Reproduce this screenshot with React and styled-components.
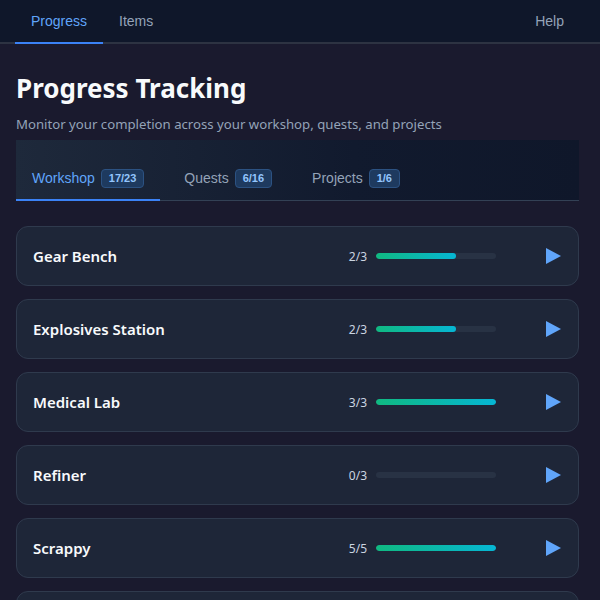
import React from 'react';
import styled, { createGlobalStyle } from 'styled-components';

const GlobalStyle = createGlobalStyle`
  html, body {
    margin: 0;
    padding: 0;
    background: #1a1a2e;
  }
  body {
    font-family: "Segoe UI", "Noto Sans", "Liberation Sans", sans-serif;
    color: #f1f5f9;
  }
  * { box-sizing: border-box; }
`;

// Top navigation
const Nav = styled.nav`
  height: 44px;
  display: flex;
  align-items: stretch;
  padding: 0 20px 0 15px;
  background: #0f172a;
  border-bottom: 2px solid #2d3342;
`;

const NavTab = styled.button`
  font-family: "Liberation Sans", Arial, sans-serif;
  font-size: 14px;
  background: none;
  border: none;
  padding: 0 16px;
  margin-bottom: -2px;
  color: ${p => (p.active ? '#60a5fa' : '#94a3b8')};
  border-bottom: 2px solid ${p => (p.active ? '#3b82f6' : 'transparent')};
  cursor: pointer;
  margin-left: ${p => (p.push ? 'auto' : '0')};
`;

const Main = styled.main`
  padding: 26px 21px 0 16px;
`;

const Title = styled.h1`
  margin: 0;
  font-size: 26px;
  font-weight: 700;
  line-height: 36px;
  color: #f8fafc;
`;

const Subtitle = styled.p`
  margin: 8px 0 0;
  font-size: 13.2px;
  line-height: 20px;
  color: #94a3b8;
`;

// Section tabs
const TabBar = styled.div`
  margin-top: 6px;
  height: 61px;
  display: flex;
  align-items: flex-end;
  background: linear-gradient(90deg, #1e293b 0%, #111a2e 60%, #0f172a 100%);
  border-bottom: 1px solid #334155;
`;

const Tab = styled.button`
  font-family: "Liberation Sans", Arial, sans-serif;
  font-size: 14px;
  height: 42px;
  padding: 0 16px 2px;
  display: flex;
  align-items: center;
  gap: 6px;
  background: none;
  border: none;
  margin-bottom: -1px;
  margin-right: 8px;
  color: ${p => (p.active ? '#60a5fa' : '#94a3b8')};
  border-bottom: 2px solid ${p => (p.active ? '#3b82f6' : 'transparent')};
`;

const Badge = styled.span`
  font-family: "Liberation Sans", Arial, sans-serif;
  font-size: 11px;
  font-weight: 700;
  line-height: 15px;
  padding: 1px 7px;
  border-radius: 4px;
  background: #1e3a5f;
  border: 1px solid #2c5282;
  color: #93c5fd;
`;

// Station cards
const List = styled.div`
  margin-top: 25px;
  display: flex;
  flex-direction: column;
  gap: 13px;
`;

const Card = styled.div`
  height: 60px;
  display: flex;
  align-items: center;
  padding: 0 17px 0 16px;
  background: #1e2638;
  border: 1px solid #2f3a4d;
  border-radius: 12px;
`;

const Name = styled.span`
  flex: 1;
  font-size: 15px;
  font-weight: 600;
  color: #f8fafc;
`;

const Count = styled.span`
  font-size: 12px;
  color: #cbd5e1;
  margin-right: 9px;
`;

const Track = styled.div`
  width: 120px;
  height: 6px;
  border-radius: 3px;
  background: #283244;
  overflow: hidden;
  margin-right: 50px;
`;

const Fill = styled.div`
  height: 100%;
  border-radius: 3px;
  background: linear-gradient(90deg, #10b981, #06b6d4);
`;

const Play = () => (
  <svg width="15" height="16" viewBox="0 0 15 16">
    <path d="M0 0 L15 8 L0 16 Z" fill="#60a5fa" />
  </svg>
);

const stations = [
  { name: 'Gear Bench', done: 2, total: 3 },
  { name: 'Explosives Station', done: 2, total: 3 },
  { name: 'Medical Lab', done: 3, total: 3 },
  { name: 'Refiner', done: 0, total: 3 },
  { name: 'Scrappy', done: 5, total: 5 },
  { name: 'Utility Station', done: 2, total: 3 },
];

export default function App() {
  return (
    <>
      <GlobalStyle />
      <Nav>
        <NavTab active>Progress</NavTab>
        <NavTab>Items</NavTab>
        <NavTab push>Help</NavTab>
      </Nav>
      <Main>
        <Title>Progress Tracking</Title>
        <Subtitle>Monitor your completion across your workshop, quests, and projects</Subtitle>
        <TabBar>
          <Tab active>Workshop <Badge>17/23</Badge></Tab>
          <Tab>Quests <Badge>6/16</Badge></Tab>
          <Tab>Projects <Badge>1/6</Badge></Tab>
        </TabBar>
        <List>
          {stations.map(s => (
            <Card key={s.name}>
              <Name>{s.name}</Name>
              <Count>{s.done}/{s.total}</Count>
              <Track>
                {s.done > 0 && <Fill style={{ width: `${(s.done / s.total) * 100}%` }} />}
              </Track>
              <Play />
            </Card>
          ))}
        </List>
      </Main>
    </>
  );
}
